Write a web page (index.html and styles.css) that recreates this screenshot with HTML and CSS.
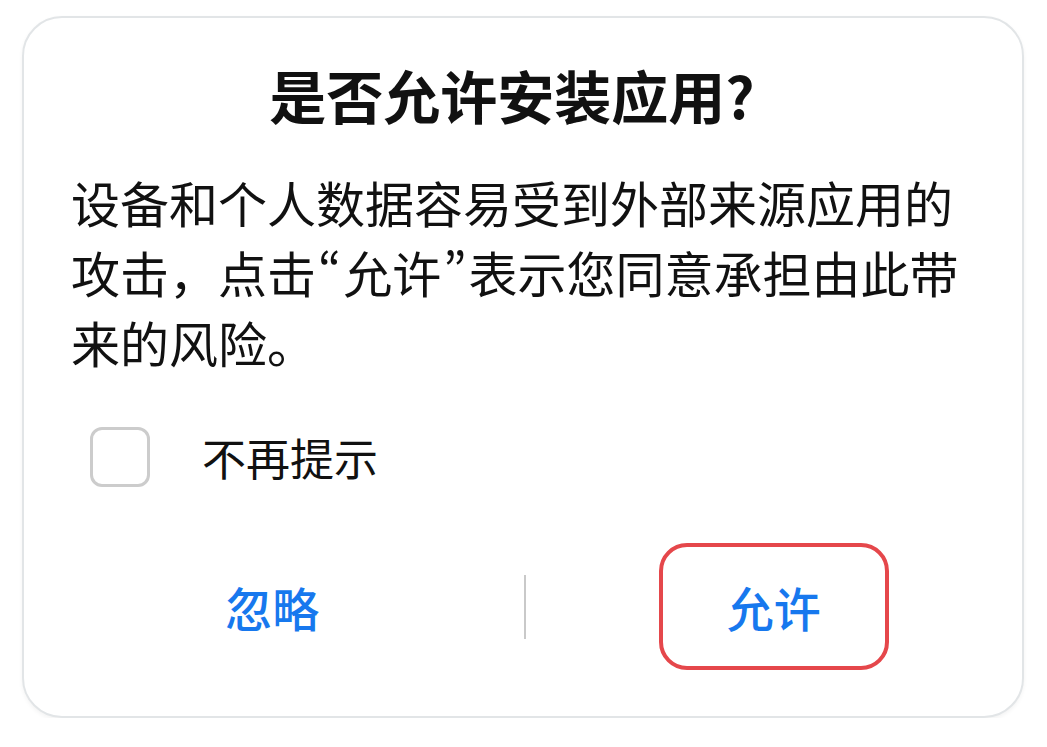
FILE: index.html
```html
<!DOCTYPE html>
<html lang="zh-CN">
<head>
<meta charset="utf-8">
<title>是否允许安装应用?</title>
<link rel="stylesheet" href="styles.css">
</head>
<body>
<div class="card">
  <div class="content">
    <h1 class="title">是否允许安装应用?</h1>
    <p class="message">设备和个人数据容易受到外部来源应用的攻击，点击<span class="quote">“</span>允许<span class="quote">”</span>表示您同意承担由此带来的风险。</p>
    <label class="option">
      <span class="checkbox"></span>
      <span class="option-text">不再提示</span>
    </label>
  </div>
  <div class="actions">
    <div class="action-cell">
      <button class="btn">忽略</button>
    </div>
    <div class="divider"></div>
    <div class="action-cell">
      <button class="btn btn-allow">允许</button>
    </div>
  </div>
</div>
</body>
</html>
```
FILE: styles.css
```css
html, body {
  margin: 0;
  padding: 0;
  background: #ffffff;
}

body {
  font-family: "Noto Sans CJK SC", "Noto Sans", sans-serif;
  color: #111111;
  padding: 16px 0 0 22px;
}

.card {
  box-sizing: border-box;
  width: 1002px;
  height: 702px;
  border: 2px solid #e2e5e7;
  border-radius: 40px;
  background: #ffffff;
  box-shadow: 0 2px 4px rgba(0, 0, 0, 0.05);
  display: flex;
  flex-direction: column;
}

.content {
  padding: 40px 47px 0 47px;
}

.title {
  margin: 0;
  padding-right: 22px;
  font-size: 57px;
  line-height: 72px;
  font-weight: 700;
  text-align: center;
}

.message {
  margin: 37px 0 0 0;
  font-size: 49px;
  line-height: 70px;
  font-weight: 400;
}

.quote {
  font-feature-settings: "pwid" 1;
  margin: 0 2px;
}

.option {
  margin-top: 50px;
  display: flex;
  align-items: center;
  height: 60px;
}

.checkbox {
  box-sizing: border-box;
  width: 60px;
  height: 60px;
  margin-left: 19px;
  border: 3px solid #cccccc;
  border-radius: 12px;
  background: #ffffff;
}

.option-text {
  margin-left: 52px;
  font-size: 44px;
  line-height: 60px;
}

.actions {
  margin-top: 56px;
  display: flex;
  align-items: center;
  height: 127px;
}

.action-cell {
  flex: 1;
  display: flex;
  justify-content: center;
  align-items: center;
}

.divider {
  width: 2px;
  height: 64px;
  margin-left: 3px;
  background: #c9c9c9;
}

.btn {
  font-family: "Noto Sans CJK SC", "Noto Sans", sans-serif;
  font-size: 47px;
  font-weight: 500;
  color: #1778ee;
  background: transparent;
  border: 4px solid transparent;
  border-radius: 28px;
  width: 230px;
  height: 127px;
  padding: 0;
  cursor: pointer;
}

.btn-allow {
  border-color: #e5474b;
}
```
